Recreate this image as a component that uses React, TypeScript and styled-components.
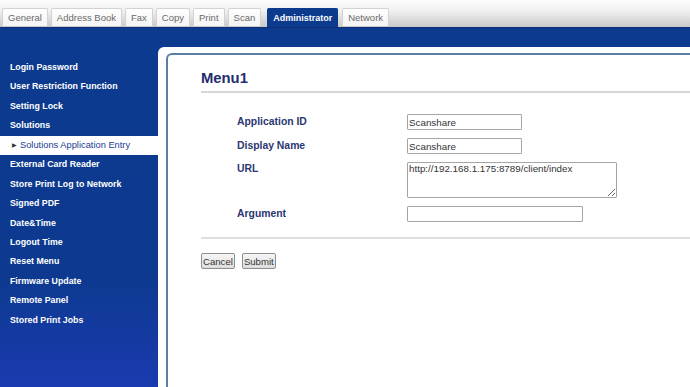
import React from 'react';
import styled, { createGlobalStyle } from 'styled-components';

const GlobalStyle = createGlobalStyle`
    html, body {
        margin: 0;
        padding: 0;
        overflow: hidden;
    }

    body {
        font-family: "Liberation Sans", Arial, sans-serif;
        background: #ffffff;
    }
`;

const StyledPage = styled.div`
        display: flex;
        flex-direction: column;
        width: 690px;
        height: 387px;
    `;

const StyledHeader = styled.header`
        height: 27px;
        display: flex;
        align-items: flex-end;
        padding-left: 2px;
        background: linear-gradient(#fdfdfd 0%, #f0f0f0 40%, #c9c9c9 100%);
        box-sizing: border-box;
    `;

const StyledTabs = styled.ul`
        display: flex;
        gap: 3px;
        margin: 0;
        padding: 0;
        list-style: none;
    `;

const StyledTab = styled.li<{ $active?: boolean }>`
        height: ${(p) => (p.$active ? '18px' : '17px')};
        line-height: ${(p) => (p.$active ? '18px' : '17px')};
        padding: 0 5px;
        margin: ${(p) => (p.$active ? '0 1px 0 3px' : '0')};
        font-size: ${(p) => (p.$active ? '9px' : '9.5px')};
        font-weight: ${(p) => (p.$active ? 700 : 400)};
        color: ${(p) => (p.$active ? '#ffffff' : '#6a6a6a')};
        background: ${(p) => (p.$active ? '#0c3a8c' : 'linear-gradient(#ffffff, #f3f3f3)')};
        border: 1px solid ${(p) => (p.$active ? '#0c3a8c' : '#d2d2d2')};
        border-bottom: none;
        border-radius: 2px 2px 0 0;
        white-space: nowrap;
    `;

const StyledBody = styled.div`
        flex: 1;
        display: flex;
        min-height: 0;
        background: linear-gradient(#0c3a8e 0%, #0d3a90 70%, #1a3ab0 100%);
        border-top: 1px solid #0a2f78;
    `;

const StyledSidebar = styled.nav`
        width: 158px;
        flex-shrink: 0;
        padding-top: 30px;
    `;

const StyledMenu = styled.ul`
        margin: 0;
        padding: 0;
        list-style: none;
    `;

const StyledMenuItem = styled.li<{ $selected?: boolean }>`
        height: 19.45px;
        line-height: 19.45px;
        padding-left: ${(p) => (p.$selected ? '12px' : '10px')};
        font-size: ${(p) => (p.$selected ? '9.3px' : '8.8px')};
        font-weight: ${(p) => (p.$selected ? 400 : 700)};
        color: ${(p) => (p.$selected ? '#1b3c95' : '#ffffff')};
        background: ${(p) => (p.$selected ? '#ffffff' : 'transparent')};
        white-space: nowrap;
    `;

const StyledArrow = styled.span`
        display: inline-block;
        font-size: 6px;
        margin-right: 3px;
        color: #333333;
        vertical-align: 1px;
    `;

const StyledPanel = styled.main`
        flex: 1;
        display: flex;
        margin-top: 19px;
        padding: 6px 0 0 8px;
        background: #ffffff;
        border-top-left-radius: 6px;
    `;

const StyledFrame = styled.section`
        flex: 1;
        padding: 14px 0 0 33px;
        border-top: 2px solid #5a7ea6;
        border-left: 2px solid #5a7ea6;
        border-top-left-radius: 6px;
    `;

const StyledTitle = styled.h1`
        margin: 0;
        padding-bottom: 4px;
        font-size: 14.8px;
        line-height: 18px;
        font-weight: 700;
        color: #1f2e6c;
        border-bottom: 2px solid #d6d6d6;
    `;

const StyledForm = styled.div`
        display: grid;
        grid-template-columns: 206px 1fr;
        row-gap: 8px;
        margin-top: 21px;
    `;

const StyledLabel = styled.label<{ $top?: boolean }>`
        padding-left: 36px;
        align-self: ${(p) => (p.$top ? 'start' : 'center')};
        padding-top: ${(p) => (p.$top ? '1px' : '0')};
        font-size: 10.4px;
        line-height: 12px;
        font-weight: 700;
        color: #2b3772;
    `;

const StyledInput = styled.input<{ $width: number }>`
        display: block;
        width: ${(p) => p.$width}px;
        height: 16px;
        box-sizing: border-box;
        margin: 0;
        padding: 0 1px;
        font-family: "Liberation Sans", Arial, sans-serif;
        font-size: 9.8px;
        color: #333333;
        border: 1px solid #a5a5a5;
        border-radius: 1px;
        outline: none;
    `;

const StyledTextArea = styled.textarea`
        display: block;
        width: 210px;
        height: 36px;
        box-sizing: border-box;
        margin: 0;
        padding: 0 1px;
        font-family: "Liberation Sans", Arial, sans-serif;
        font-size: 9.8px;
        color: #333333;
        border: 1px solid #a5a5a5;
        border-radius: 1px;
        outline: none;
    `;

const StyledDivider = styled.hr`
        margin: 15px 0 0 0;
        border: none;
        border-top: 2px solid #e0e0e0;
    `;

const StyledActions = styled.div`
        display: flex;
        gap: 7px;
        margin-top: 14px;
    `;

const StyledButton = styled.button`
        height: 16px;
        padding: 0 1px;
        font-family: "Liberation Sans", Arial, sans-serif;
        font-size: 9.6px;
        color: #333333;
        background: linear-gradient(#f6f6f6, #dedede);
        border: 1px solid #8e8e8e;
        border-radius: 2px;
    `;

const tabs = ['General', 'Address Book', 'Fax', 'Copy', 'Print', 'Scan', 'Administrator', 'Network'];

const menu = [
    'Login Password',
    'User Restriction Function',
    'Setting Lock',
    'Solutions',
    'Solutions Application Entry',
    'External Card Reader',
    'Store Print Log to Network',
    'Signed PDF',
    'Date&Time',
    'Logout Time',
    'Reset Menu',
    'Firmware Update',
    'Remote Panel',
    'Stored Print Jobs',
];

export default function App() {
    const tabList = tabs.map((tab) => (
        <StyledTab key={tab} $active={tab === 'Administrator'}>{tab}</StyledTab>
    ));

    const menuList = menu.map((item) => {
        const selected = item === 'Solutions Application Entry';
        return (
            <StyledMenuItem key={item} $selected={selected}>
                {selected && <StyledArrow>▶</StyledArrow>}
                {item}
            </StyledMenuItem>
        );
    });

    return (
        <>
            <GlobalStyle />
            <StyledPage>
                <StyledHeader>
                    <StyledTabs>{tabList}</StyledTabs>
                </StyledHeader>

                <StyledBody>
                    <StyledSidebar>
                        <StyledMenu>{menuList}</StyledMenu>
                    </StyledSidebar>

                    <StyledPanel>
                        <StyledFrame>
                            <StyledTitle>Menu1</StyledTitle>

                            <StyledForm>
                                <StyledLabel>Application ID</StyledLabel>
                                <StyledInput $width={115} defaultValue="Scanshare" />

                                <StyledLabel>Display Name</StyledLabel>
                                <StyledInput $width={115} defaultValue="Scanshare" />

                                <StyledLabel $top>URL</StyledLabel>
                                <StyledTextArea defaultValue="http://192.168.1.175:8789/client/index" />

                                <StyledLabel>Argument</StyledLabel>
                                <StyledInput $width={176} defaultValue="" />
                            </StyledForm>

                            <StyledDivider />

                            <StyledActions>
                                <StyledButton>Cancel</StyledButton>
                                <StyledButton>Submit</StyledButton>
                            </StyledActions>
                        </StyledFrame>
                    </StyledPanel>
                </StyledBody>
            </StyledPage>
        </>
    );
}
